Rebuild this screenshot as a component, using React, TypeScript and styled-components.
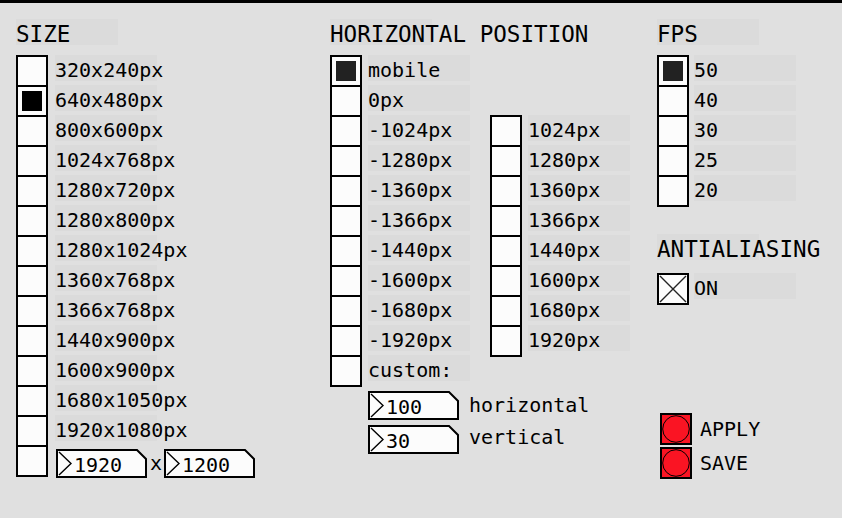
import React from "react";
import styled, { createGlobalStyle } from "styled-components";

const Global = createGlobalStyle`
  html, body { margin: 0; padding: 0; background: #e0e0e0; }
  body { width: 842px; height: 518px; overflow: hidden; font-family: "DejaVu Sans Mono", "Liberation Mono", monospace; color: #000; }
`;

const Page = styled.div`
  width: 842px;
  height: 518px;
  box-sizing: border-box;
  background: #e0e0e0;
  border-top: 3px solid #000;
`;

const Canvas = styled.div`
  display: grid;
  grid-template-columns: 314px 327px 1fr;
  padding: 16px 0 0 16px;
`;

const Column = styled.div`
  display: flex;
  flex-direction: column;
  align-items: flex-start;
`;

const Heading = styled.div<{ $mt?: number }>`
  width: 102px;
  height: 26px;
  margin-top: ${(p) => p.$mt ?? 0}px;
  box-sizing: border-box;
  background: #dbdbdb;
  font-size: 22.6px;
  line-height: 31px;
  white-space: nowrap;
  overflow: visible;
`;

const Group = styled.div<{ $mt?: number }>`
  display: flex;
  flex-direction: column;
  margin-top: ${(p) => p.$mt ?? 10}px;
`;

const Row = styled.div`
  display: flex;
  align-items: flex-start;
  height: 30px;
`;

const Cell = styled.div`
  flex: none;
  width: 32px;
  height: 32px;
  box-sizing: border-box;
  border: 2px solid #000;
  background: #fcfcfc;
  display: flex;
  align-items: center;
  justify-content: center;
`;

const Mark = styled.div<{ $tone?: string }>`
  width: 20px;
  height: 20px;
  background: ${(p) => p.$tone ?? "#111"};
`;

const Label = styled.div<{ $gap?: number }>`
  flex: none;
  width: 102px;
  height: 26px;
  margin-left: ${(p) => p.$gap ?? 6}px;
  background: #dbdbdb;
  font-size: 20px;
  line-height: 30px;
  white-space: nowrap;
`;

const Split = styled.div`
  display: flex;
  gap: 20px;
  margin-top: 10px;
`;

const NumRow = styled.div<{ $mt: number; $ml: number }>`
  display: flex;
  align-items: flex-start;
  gap: 10px;
  margin-top: ${(p) => p.$mt}px;
  margin-left: ${(p) => p.$ml}px;
`;

const InlineRow = styled.div`
  display: flex;
  align-items: flex-start;
  margin-left: 8px;
  margin-top: 4px;
`;

const NumBoxWrap = styled.div`
  position: relative;
  flex: none;
  width: 91px;
  height: 29px;
  box-sizing: border-box;
  padding-left: 18px;
  font-size: 20px;
  line-height: 32px;
  white-space: nowrap;
`;

const NumBoxShape = styled.svg`
  position: absolute;
  left: 0;
  top: 0;
  z-index: 0;
`;

const NumText = styled.span`
  position: relative;
  z-index: 1;
`;

const Times = styled.div`
  width: 17px;
  height: 29px;
  padding-left: 3px;
  box-sizing: border-box;
  font-size: 20px;
  line-height: 28px;
`;

const SideLabel = styled.div<{ $lh: number }>`
  font-size: 20px;
  line-height: ${(p) => p.$lh}px;
  white-space: nowrap;
`;

const ToggleRow = styled.div`
  display: flex;
  align-items: flex-start;
  margin-top: 13px;
`;

const Bangs = styled.div`
  display: flex;
  flex-direction: column;
  gap: 2px;
  margin-top: 108px;
  margin-left: 3px;
`;

const BangRow = styled.div`
  display: flex;
  align-items: flex-start;
`;

const BangBox = styled.div`
  flex: none;
  width: 32px;
  height: 32px;
  box-sizing: border-box;
  border: 2px solid #000;
  background: #fa1423;
  display: flex;
  align-items: center;
  justify-content: center;
`;

const BangLabel = styled.div`
  margin-left: 8px;
  font-size: 20px;
  line-height: 33px;
  height: 32px;
`;

const NumberBox = ({ value }: { value: string }) => (
  <NumBoxWrap>
    <NumBoxShape width="91" height="29" viewBox="0 0 91 29">
      <path d="M1 1 H81 L90 10 V28 H1 Z" fill="#fcfcfc" stroke="#000" strokeWidth="2" />
      <path d="M3 3 L15 14.5 L3 26" fill="none" stroke="#000" strokeWidth="1.4" />
    </NumBoxShape>
    <NumText>{value}</NumText>
  </NumBoxWrap>
);

const RadioList = ({
  items,
  selected,
  gap,
  tone,
}: {
  items: string[];
  selected?: number;
  gap?: number;
  tone?: string;
}) => (
  <>
    {items.map((t, i) => (
      <Row key={t + i}>
        <Cell>{selected === i && <Mark $tone={tone} />}</Cell>
        <Label $gap={gap}>{t}</Label>
      </Row>
    ))}
  </>
);

const Bang = ({ label }: { label: string }) => (
  <BangRow>
    <BangBox>
      <svg width="28" height="28" viewBox="0 0 28 28">
        <circle cx="14" cy="14" r="13.3" fill="#fa1423" stroke="#000" strokeWidth="1" />
      </svg>
    </BangBox>
    <BangLabel>{label}</BangLabel>
  </BangRow>
);

const sizes = [
  "320x240px",
  "640x480px",
  "800x600px",
  "1024x768px",
  "1280x720px",
  "1280x800px",
  "1280x1024px",
  "1360x768px",
  "1366x768px",
  "1440x900px",
  "1600x900px",
  "1680x1050px",
  "1920x1080px",
];

const leftPos = [
  "mobile",
  "0px",
  "-1024px",
  "-1280px",
  "-1360px",
  "-1366px",
  "-1440px",
  "-1600px",
  "-1680px",
  "-1920px",
  "custom:",
];

const rightPos = ["1024px", "1280px", "1360px", "1366px", "1440px", "1600px", "1680px", "1920px"];

const fps = ["50", "40", "30", "25", "20"];

export default function App() {
  return (
    <>
      <Global />
      <Page>
        <Canvas>
          <Column>
            <Heading>SIZE</Heading>
            <Group>
              <RadioList items={sizes} selected={1} gap={7} tone="#000" />
              <Row>
                <Cell />
                <InlineRow>
                  <NumberBox value="1920" />
                  <Times>x</Times>
                  <NumberBox value="1200" />
                </InlineRow>
              </Row>
            </Group>
          </Column>

          <Column>
            <Heading>HORIZONTAL POSITION</Heading>
            <Split>
              <Column>
                <RadioList items={leftPos} selected={0} tone="#222" />
              </Column>
              <Group $mt={60}>
                <RadioList items={rightPos} />
              </Group>
            </Split>
            <NumRow $mt={6} $ml={38}>
              <NumberBox value="100" />
              <SideLabel $lh={29}>horizontal</SideLabel>
            </NumRow>
            <NumRow $mt={5} $ml={38}>
              <NumberBox value="30" />
              <SideLabel $lh={25}>vertical</SideLabel>
            </NumRow>
          </Column>

          <Column>
            <Heading>FPS</Heading>
            <Group>
              <RadioList items={fps} selected={0} gap={5} tone="#222" />
            </Group>
            <Heading $mt={29}>ANTIALIASING</Heading>
            <ToggleRow>
              <Cell>
                <svg width="28" height="28" viewBox="0 0 28 28">
                  <path d="M1 1 L27 27 M27 1 L1 27" stroke="#222" strokeWidth="1.4" />
                </svg>
              </Cell>
              <Label $gap={5}>ON</Label>
            </ToggleRow>
            <Bangs>
              <Bang label="APPLY" />
              <Bang label="SAVE" />
            </Bangs>
          </Column>
        </Canvas>
      </Page>
    </>
  );
}
